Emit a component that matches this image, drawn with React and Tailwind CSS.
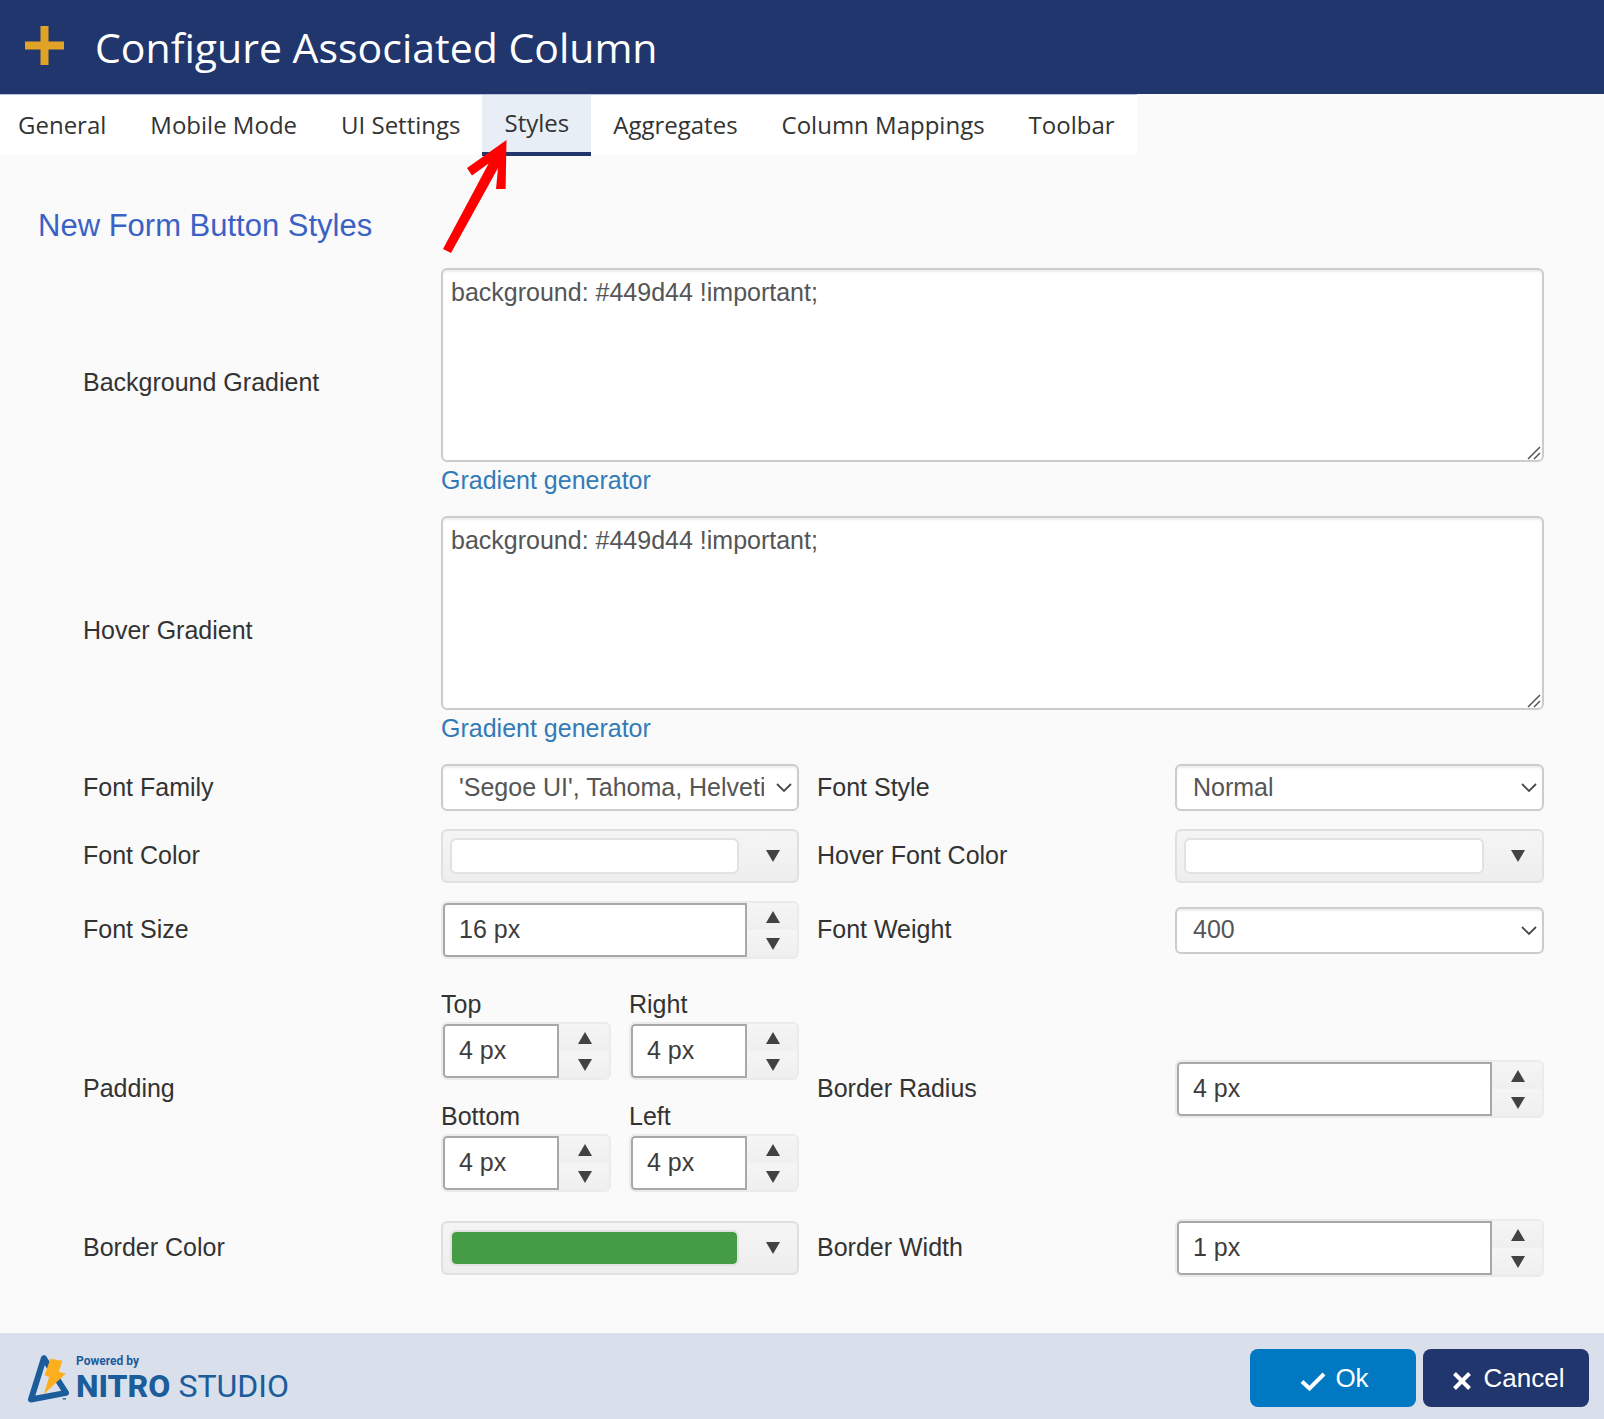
import { useState } from 'react'

const TABS = ['General', 'Mobile Mode', 'UI Settings', 'Styles', 'Aggregates', 'Column Mappings', 'Toolbar']

const fontFamilies = ["'Segoe UI', Tahoma, Helvetica, sans-serif", 'Arial, sans-serif']
const sides = ['Top', 'Right', 'Bottom', 'Left']

const Triangle = ({ up = false }) => (
  <svg className="w-[14px] h-[12px]" viewBox="0 0 14 12" aria-hidden="true">
    <path d={up ? 'M7 0 14 12H0z' : 'M0 0h14L7 12z'} fill="#424242" />
  </svg>
)

function GradientField({ id, label }) {
  const [value, setValue] = useState('background: #449d44 !important;')
  return (
    <>
      <label htmlFor={id}>{label}</label>
      <div className="col-span-3">
        <div className="relative">
          <textarea id={id} value={value} onChange={e => setValue(e.target.value)}
            className="block w-full h-[194px] resize-none rounded-md border-2 border-[#ccc] bg-white px-2 py-1 leading-[36px] text-[#555] shadow-[inset_0_2px_2px_rgba(0,0,0,0.07)] focus:outline-none" />
          <svg className="absolute right-[3px] bottom-[2px] w-[14px] h-[14px] pointer-events-none" viewBox="0 0 14 14" aria-hidden="true">
            <path d="M1 13 13 1M7 13l6-6" stroke="#555" strokeWidth="1.5" fill="none" />
          </svg>
        </div>
        <a href="#generator" className="block w-fit leading-[36px] text-[#337ab7]">Gradient generator</a>
      </div>
    </>
  )
}

function SelectBox({ id, options }) {
  return (
    <div className="relative">
      <select id={id}
        className="block w-full h-[47px] appearance-none rounded-md border-2 border-[#ccc] bg-white pl-4 pr-[33px] text-[#555] shadow-[inset_0_2px_2px_rgba(0,0,0,0.07)] focus:outline-none">
        {options.map(o => <option key={o}>{o}</option>)}
      </select>
      <svg className="absolute right-[7px] top-[19px] w-4 h-[10px] pointer-events-none" viewBox="0 0 16 10" aria-hidden="true">
        <path d="M1 1l7 7 7-7" stroke="#4a4a4a" strokeWidth="1.8" fill="none" />
      </svg>
    </div>
  )
}

function ColorPicker({ id, swatch }) {
  return (
    <button id={id} type="button"
      className="flex w-full h-[54px] items-center rounded-md border-2 border-[#e0e0e0] bg-gradient-to-b from-[#f5f5f5] to-[#eee] pl-[7px]">
      <span className={`h-[36px] flex-1 rounded-md border-2 border-[#e2e2e2] bg-clip-padding ${swatch}`} />
      <span className="flex w-[58px] justify-center pl-[10px]"><Triangle /></span>
    </button>
  )
}

function Spinner({ id, initial }) {
  const [value, setValue] = useState(initial)
  const step = (d) => setValue(v => `${Math.max(0, (parseInt(v, 10) || 0) + d)} px`)
  const btn = 'flex flex-1 justify-center pl-[2px] bg-gradient-to-b from-[#f5f5f5] to-[#efefef]'
  return (
    <div className="flex h-[58px] overflow-hidden rounded-md border-2 border-[#ebebeb]">
      <input id={id} type="text" value={value} onChange={e => setValue(e.target.value)}
        className="min-w-0 flex-1 rounded-l-sm border-2 border-[#a8a8a8] bg-white px-3.5 text-[#3c3c3c] focus:outline-none" />
      <div className="flex w-[50px] flex-col">
        <button type="button" aria-label="Increase" onClick={() => step(1)} className={`${btn} items-end pb-[7px]`}><Triangle up /></button>
        <button type="button" aria-label="Decrease" onClick={() => step(-1)} className={`${btn} items-start pt-[8px]`}><Triangle /></button>
      </div>
    </div>
  )
}

function NitroLogo() {
  return (
    <div className="flex items-center gap-[6px] pt-[6px] font-[Roboto,sans-serif] text-[#1b5c9b]">
      <svg className="w-[43px] h-[50px]" viewBox="80 130 130 150" aria-hidden="true">
        <path d="M131 142 92 267 198 247Z" fill="none" stroke="#1b5c9b" strokeWidth="18" strokeLinejoin="round" />
        <path d="M151 144 187 150 176 183 197 189 131 250 147 199 133 194Z" fill="#fdae1e" />
        <path d="M188 265h10" stroke="#1b5c9b" strokeWidth="4" />
      </svg>
      <div className="flex flex-col">
        <span className="text-[12px] leading-[14px] font-bold">Powered by</span>
        <span className="flex gap-[8px] text-[32px] leading-[36px]">
          <span className="font-extrabold">NITRO</span>
          <span>STUDIO</span>
        </span>
      </div>
    </div>
  )
}

export default function App() {
  const [tab, setTab] = useState('Styles')

  return (
    <div className="flex min-h-screen flex-col bg-[#fafafa] font-['Liberation_Sans',Arial,sans-serif] text-[25px] text-[#333]">
      <header className="flex h-[94px] items-center gap-[31px] bg-[#21366d] pl-[25px] font-['Open_Sans',sans-serif]">
        <svg className="mb-1 w-[39px] h-[39px]" viewBox="0 0 39 39" aria-hidden="true">
          <path d="M19.5 0v39M0 19.5h39" stroke="#e0a328" strokeWidth="8" />
        </svg>
        <h1 className="text-[41px] leading-none text-white">Configure Associated Column</h1>
      </header>

      <nav className="flex h-[60px] w-fit items-start border-t border-[#b9c3d9] bg-white font-['Open_Sans',sans-serif] text-[24px] leading-[36px]">
        {TABS.map(t => (
          <div key={t} className="relative first:-ml-1">
            <button type="button" onClick={() => setTab(t)}
              className={t === tab
                ? 'block h-[61px] border-b-4 border-[#21366d] bg-[#e7eef5] px-[22px] pb-[2px]'
                : 'block h-[59px] px-[22px]'}>
              {t}
            </button>
            {t === 'Styles' && (
              <svg className="absolute left-[-40px] top-[44px] z-10 w-[66px] h-[116px] pointer-events-none" viewBox="440 139 66 116" aria-hidden="true">
                <path d="M504.5 140 465 168l5 7.5 16.600-12L441 249l8 4 47-85-2 21h9.600z" fill="#f00" />
              </svg>
            )}
          </div>
        ))}
      </nav>

      <main className="flex-1 pt-[54px] pb-[50px]">
        <h2 className="pl-[38px] text-[31px] leading-[36px] text-[#3a62c4]">New Form Button Styles</h2>

        <form onSubmit={e => e.preventDefault()}
          className="mt-[24px] grid grid-cols-[358fr_358fr_376fr_369fr] items-center gap-y-[18px] pl-[83px] pr-[60px]">
          <GradientField id="bg-gradient" label="Background Gradient" />
          <GradientField id="hover-gradient" label="Hover Gradient" />

          <label htmlFor="font-family">Font Family</label>
          <SelectBox id="font-family" options={fontFamilies} />
          <label htmlFor="font-style" className="pl-[18px]">Font Style</label>
          <SelectBox id="font-style" options={['Normal', 'Italic', 'Oblique']} />

          <label htmlFor="font-color">Font Color</label>
          <ColorPicker id="font-color" swatch="bg-white" />
          <label htmlFor="hover-color" className="pl-[18px]">Hover Font Color</label>
          <ColorPicker id="hover-color" swatch="bg-white" />

          <label htmlFor="font-size">Font Size</label>
          <Spinner id="font-size" initial="16 px" />
          <label htmlFor="font-weight" className="pl-[18px]">Font Weight</label>
          <SelectBox id="font-weight" options={['400', '500', '600', '700']} />

          <span>Padding</span>
          <div className="my-[9px] grid grid-cols-2 gap-[18px]">
            {sides.map(s => (
              <div key={s}>
                <label htmlFor={`padding-${s}`} className="block leading-[36px]">{s}</label>
                <Spinner id={`padding-${s}`} initial="4 px" />
              </div>
            ))}
          </div>
          <label htmlFor="border-radius" className="pl-[18px]">Border Radius</label>
          <Spinner id="border-radius" initial="4 px" />

          <label htmlFor="border-color">Border Color</label>
          <ColorPicker id="border-color" swatch="bg-[#449d44]" />
          <label htmlFor="border-width" className="pl-[18px]">Border Width</label>
          <Spinner id="border-width" initial="1 px" />
        </form>
      </main>

      <footer className="flex h-[86px] items-center justify-between bg-[#d9dfeb] pl-[27px] pr-[15px]">
        <NitroLogo />
        <div className="flex gap-[7px] pt-[3px] text-[26px] text-white">
          <button type="button" className="flex h-[58px] w-[166px] items-center justify-center gap-[9px] rounded-lg bg-[#0078c2] pt-[2px] pl-[3px]">
            <svg className="mt-1 w-[26px] h-[20px]" viewBox="0 0 26 20" aria-hidden="true">
              <path d="M2 10.500l7.500 7L24 3" fill="none" stroke="#fff" strokeWidth="4" />
            </svg>
            Ok
          </button>
          <button type="button" className="flex h-[58px] w-[166px] items-center justify-center gap-[13px] rounded-lg bg-[#21366d] pt-[2px] pl-[5px]">
            <svg className="mt-1 w-[18px] h-[18px]" viewBox="0 0 18 18" aria-hidden="true">
              <path d="M1.500 1.500l15 15M16.500 1.500l-15 15" stroke="#fff" strokeWidth="4" />
            </svg>
            Cancel
          </button>
        </div>
      </footer>
    </div>
  )
}
